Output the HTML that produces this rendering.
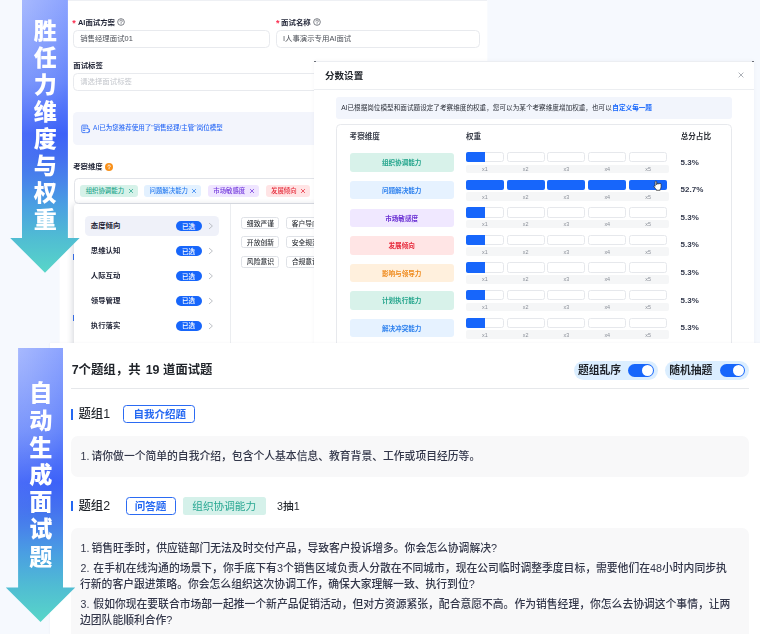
<!DOCTYPE html>
<html lang="zh-CN"><head><meta charset="utf-8"><title>AI面试 - 胜任力维度与权重 / 自动生成面试题</title><style>
html,body{margin:0;padding:0}
body{width:760px;height:634px;overflow:hidden;background:#f6f9fe;position:relative;font-family:"Liberation Sans","Noto Sans CJK SC",sans-serif}
.L{position:absolute;left:0;top:0;display:block;margin:0}
.b{position:absolute;display:block}
.blur{filter:blur(.3px)}
.t{position:absolute;overflow:visible;line-height:1}
.lt{position:absolute;white-space:nowrap;margin:0;font-family:"Liberation Sans","Noto Sans CJK SC",sans-serif}
.sr{position:absolute;left:1px;top:1px;white-space:nowrap;line-height:1.067;font-family:"Liberation Sans","Noto Sans CJK SC",sans-serif}
</style></head><body><main><section class="L blur" id="form"><div class="b" style="left:60px;top:0px;width:427px;height:346px;background:#fff;box-shadow:0 0 2px #fff;"></div><div class="b" style="left:60px;top:0px;width:427px;height:1px;background:#eef0f4;"></div><div class="t" style="left:71.3px;top:18.48px;width:6.56px;height:12.44px"><span class="sr" style="font-size:9px;font-weight:700;color:#fb2c4e">*</span></div><div class="t" style="left:77px;top:17.9px;width:39px;height:10.58px"><span class="sr" style="font-size:7.4px;font-weight:700;color:#1d2133">AI面试方案</span></div><svg class="b" style="left:116.3px;top:17.4px" width="10" height="10" viewBox="0 0 10 10"><circle cx="5" cy="5" r="3.35" fill="none" stroke="#555a63" stroke-width=".75"/><path d="M3.9 4.1a1.15 1.15 0 1 1 1.7 1c-.4.25-.55.45-.55.9" fill="none" stroke="#555a63" stroke-width=".75" stroke-linecap="round"/><circle cx="5.05" cy="6.95" r=".42" fill="#555a63"/></svg><div class="b" style="left:73px;top:30px;width:197px;height:17.6px;background:#fff;border:1px solid #e8eaee;border-radius:4.5px;box-sizing:border-box;"></div><div class="t" style="left:79.2px;top:34.1px;width:55.2px;height:10.58px"><span class="sr" style="font-size:7.4px;font-weight:400;color:#4c5058">销售经理面试01</span></div><div class="t" style="left:275.1px;top:18.28px;width:6.56px;height:12.44px"><span class="sr" style="font-size:9px;font-weight:700;color:#fb2c4e">*</span></div><div class="t" style="left:280.1px;top:17.8px;width:32.4px;height:10.58px"><span class="sr" style="font-size:7.4px;font-weight:700;color:#1d2133">面试名称</span></div><svg class="b" style="left:312.3px;top:17.4px" width="10" height="10" viewBox="0 0 10 10"><circle cx="5" cy="5" r="3.35" fill="none" stroke="#555a63" stroke-width=".75"/><path d="M3.9 4.1a1.15 1.15 0 1 1 1.7 1c-.4.25-.55.45-.55.9" fill="none" stroke="#555a63" stroke-width=".75" stroke-linecap="round"/><circle cx="5.05" cy="6.95" r=".42" fill="#555a63"/></svg><div class="b" style="left:276.3px;top:30px;width:203.3px;height:17.6px;background:#fff;border:1px solid #e8eaee;border-radius:4.5px;box-sizing:border-box;"></div><div class="t" style="left:282px;top:34.1px;width:71.6px;height:10.58px"><span class="sr" style="font-size:7.4px;font-weight:400;color:#4c5058">I人事演示专用AI面试</span></div><div class="t" style="left:72.3px;top:61.1px;width:32px;height:10.58px"><span class="sr" style="font-size:7.4px;font-weight:700;color:#1d2133">面试标签</span></div><div class="b" style="left:73px;top:73.2px;width:406.6px;height:17.6px;background:#fff;border:1px solid #e8eaee;border-radius:4.5px;box-sizing:border-box;"></div><div class="t" style="left:79.2px;top:77.1px;width:54.3px;height:10.58px"><span class="sr" style="font-size:7.4px;font-weight:400;color:#c3c6cc">请选择面试标签</span></div><div class="b" style="left:73.2px;top:112.3px;width:406.4px;height:32.4px;background:#f3f5fc;border-radius:4.5px;"></div><svg class="b" style="left:80.5px;top:123.6px" width="10" height="10" viewBox="0 0 10 10"><path d="M6.7 3.2V2a.9.9 0 0 0-.9-.9H1.7a.9.9 0 0 0-.9.9v5.7a.9.9 0 0 0 .9.9h2.6" fill="none" stroke="#2f6df6" stroke-width=".85" stroke-linecap="round"/><path d="M2.3 2.95h2.9M2.3 4.7h2.2M2.3 6.45h1.5" stroke="#2f6df6" stroke-width=".85" stroke-linecap="round"/><path d="M5.6 4.6h1.8a1.2 1.2 0 0 1 1.2 1.2M8.6 7.4a1.2 1.2 0 0 1-1.2 1.2H5.6M7.5 5.75L8.6 6.6L7.5 7.45" fill="none" stroke="#2f6df6" stroke-width=".85" stroke-linecap="round" stroke-linejoin="round"/></svg><div class="t" style="left:92.1px;top:124.35px;width:133.5px;height:9.54px"><span class="sr" style="font-size:6.5px;font-weight:500;color:#2f6df6">AI已为您推荐使用了&quot;销售经理/主管&quot;岗位模型</span></div><div class="t" style="left:72.2px;top:162.1px;width:32.1px;height:10.58px"><span class="sr" style="font-size:7.4px;font-weight:700;color:#1d2133">考察维度</span></div><svg class="b" style="left:104.4px;top:161.8px" width="10" height="10" viewBox="0 0 10 10"><circle cx="5" cy="5" r="4" fill="#f8901a"/><path d="M3.9 4.2a1.15 1.15 0 1 1 1.7 1c-.4.25-.55.45-.55.85" fill="none" stroke="#fff" stroke-width=".9" stroke-linecap="round"/><circle cx="5.05" cy="6.85" r=".5" fill="#fff"/></svg><div class="b" style="left:74.2px;top:178px;width:405.4px;height:25.6px;background:#fff;border:1px solid #e2e4e9;border-radius:4.5px;box-sizing:border-box;"></div><div class="b" style="left:80.1px;top:184.6px;width:57.8px;height:12.8px;background:#d6f2e9;border-radius:3px;"></div><div class="t" style="left:84.7px;top:186.8px;width:40.6px;height:9.42px"><span class="sr" style="font-size:6.4px;font-weight:500;color:#27a68d">组织协调能力</span></div><svg class="b" style="left:125.6px;top:186px" width="10" height="10" viewBox="0 0 10 10"><path d="M3.3 3.3L6.7 6.7M6.7 3.3L3.3 6.7" stroke="#27a68d" stroke-width="0.75" stroke-linecap="round"/></svg><div class="b" style="left:144.2px;top:184.6px;width:57.1px;height:12.8px;background:#e3f1ff;border-radius:3px;"></div><div class="t" style="left:148.6px;top:186.8px;width:40.4px;height:9.42px"><span class="sr" style="font-size:6.4px;font-weight:500;color:#2a7df0">问题解决能力</span></div><svg class="b" style="left:189.2px;top:186px" width="10" height="10" viewBox="0 0 10 10"><path d="M3.3 3.3L6.7 6.7M6.7 3.3L3.3 6.7" stroke="#2a7df0" stroke-width="0.75" stroke-linecap="round"/></svg><div class="b" style="left:207.9px;top:184.6px;width:51px;height:12.8px;background:#efe5ff;border-radius:3px;"></div><div class="t" style="left:212.3px;top:186.8px;width:33.7px;height:9.42px"><span class="sr" style="font-size:6.4px;font-weight:500;color:#7238dc">市场敏感度</span></div><svg class="b" style="left:247px;top:186px" width="10" height="10" viewBox="0 0 10 10"><path d="M3.3 3.3L6.7 6.7M6.7 3.3L3.3 6.7" stroke="#7238dc" stroke-width="0.75" stroke-linecap="round"/></svg><div class="b" style="left:265.9px;top:184.6px;width:44px;height:12.8px;background:#ffe4e5;border-radius:3px;"></div><div class="t" style="left:270px;top:186.8px;width:27.7px;height:9.42px"><span class="sr" style="font-size:6.4px;font-weight:500;color:#e62e3d">发展倾向</span></div><svg class="b" style="left:298px;top:186px" width="10" height="10" viewBox="0 0 10 10"><path d="M3.3 3.3L6.7 6.7M6.7 3.3L3.3 6.7" stroke="#e62e3d" stroke-width="0.75" stroke-linecap="round"/></svg><div class="b" style="left:73px;top:254px;width:1px;height:5.5px;background:#3b74f5;"></div><div class="b" style="left:73px;top:315px;width:1px;height:5.5px;background:#3b74f5;"></div><div class="b" style="left:74.4px;top:204.3px;width:405.2px;height:144px;background:#fff;border-radius:3px;box-shadow:-1px 1px 6px rgba(30,40,70,.2);"></div><div class="b" style="left:230.2px;top:204.3px;width:1px;height:144px;background:#ebedf0;"></div><div class="b" style="left:85px;top:216.3px;width:134px;height:19.5px;background:#eff1f9;border-radius:4.5px;"></div><div class="t" style="left:89.8px;top:221.4px;width:31.8px;height:10.58px"><span class="sr" style="font-size:7.4px;font-weight:700;color:#1d2133">态度倾向</span></div><div class="b" style="left:175.8px;top:220.9px;width:26.3px;height:10.2px;background:#1766fb;border-radius:5.1px;"></div><div class="t" style="left:181px;top:221.7px;width:15.2px;height:9.66px"><span class="sr" style="font-size:6.6px;font-weight:500;color:#fff">已选</span></div><svg class="b" style="left:206px;top:221.1px" width="10" height="10" viewBox="0 0 10 10"><path d="M3.3 2.3L6.4 5L3.3 7.7" fill="none" stroke="#adb1b8" stroke-width=".8" stroke-linecap="round" stroke-linejoin="round"/></svg><div class="t" style="left:89.8px;top:246.3px;width:31.8px;height:10.58px"><span class="sr" style="font-size:7.4px;font-weight:700;color:#1d2133">思维认知</span></div><div class="b" style="left:175.8px;top:245.8px;width:26.3px;height:10.2px;background:#1766fb;border-radius:5.1px;"></div><div class="t" style="left:181px;top:246.6px;width:15.2px;height:9.66px"><span class="sr" style="font-size:6.6px;font-weight:500;color:#fff">已选</span></div><svg class="b" style="left:206px;top:246px" width="10" height="10" viewBox="0 0 10 10"><path d="M3.3 2.3L6.4 5L3.3 7.7" fill="none" stroke="#adb1b8" stroke-width=".8" stroke-linecap="round" stroke-linejoin="round"/></svg><div class="t" style="left:89.8px;top:271.2px;width:31.8px;height:10.58px"><span class="sr" style="font-size:7.4px;font-weight:700;color:#1d2133">人际互动</span></div><div class="b" style="left:175.8px;top:270.7px;width:26.3px;height:10.2px;background:#1766fb;border-radius:5.1px;"></div><div class="t" style="left:181px;top:271.5px;width:15.2px;height:9.66px"><span class="sr" style="font-size:6.6px;font-weight:500;color:#fff">已选</span></div><svg class="b" style="left:206px;top:270.9px" width="10" height="10" viewBox="0 0 10 10"><path d="M3.3 2.3L6.4 5L3.3 7.7" fill="none" stroke="#adb1b8" stroke-width=".8" stroke-linecap="round" stroke-linejoin="round"/></svg><div class="t" style="left:89.8px;top:296.1px;width:31.8px;height:10.58px"><span class="sr" style="font-size:7.4px;font-weight:700;color:#1d2133">领导管理</span></div><div class="b" style="left:175.8px;top:295.6px;width:26.3px;height:10.2px;background:#1766fb;border-radius:5.1px;"></div><div class="t" style="left:181px;top:296.4px;width:15.2px;height:9.66px"><span class="sr" style="font-size:6.6px;font-weight:500;color:#fff">已选</span></div><svg class="b" style="left:206px;top:295.8px" width="10" height="10" viewBox="0 0 10 10"><path d="M3.3 2.3L6.4 5L3.3 7.7" fill="none" stroke="#adb1b8" stroke-width=".8" stroke-linecap="round" stroke-linejoin="round"/></svg><div class="t" style="left:89.8px;top:321px;width:31.8px;height:10.58px"><span class="sr" style="font-size:7.4px;font-weight:700;color:#1d2133">执行落实</span></div><div class="b" style="left:175.8px;top:320.5px;width:26.3px;height:10.2px;background:#1766fb;border-radius:5.1px;"></div><div class="t" style="left:181px;top:321.3px;width:15.2px;height:9.66px"><span class="sr" style="font-size:6.6px;font-weight:500;color:#fff">已选</span></div><svg class="b" style="left:206px;top:320.7px" width="10" height="10" viewBox="0 0 10 10"><path d="M3.3 2.3L6.4 5L3.3 7.7" fill="none" stroke="#adb1b8" stroke-width=".8" stroke-linecap="round" stroke-linejoin="round"/></svg><div class="b" style="left:241.4px;top:216.8px;width:38.1px;height:12.1px;background:#fff;border:1px solid #dfe2e7;border-radius:2.5px;box-sizing:border-box;"></div><div class="t" style="left:245.85px;top:218.5px;width:29.2px;height:9.89px"><span class="sr" style="font-size:6.8px;font-weight:500;color:#33373d">细致严谨</span></div><div class="b" style="left:286.2px;top:216.8px;width:38.1px;height:12.1px;background:#fff;border:1px solid #dfe2e7;border-radius:2.5px;box-sizing:border-box;"></div><div class="t" style="left:290.65px;top:218.5px;width:29.2px;height:9.89px"><span class="sr" style="font-size:6.8px;font-weight:500;color:#33373d">客户导向</span></div><div class="b" style="left:241.4px;top:236.2px;width:38.1px;height:12.1px;background:#fff;border:1px solid #dfe2e7;border-radius:2.5px;box-sizing:border-box;"></div><div class="t" style="left:245.85px;top:237.9px;width:29.2px;height:9.89px"><span class="sr" style="font-size:6.8px;font-weight:500;color:#33373d">开放创新</span></div><div class="b" style="left:286.2px;top:236.2px;width:38.1px;height:12.1px;background:#fff;border:1px solid #dfe2e7;border-radius:2.5px;box-sizing:border-box;"></div><div class="t" style="left:290.65px;top:237.9px;width:29.2px;height:9.89px"><span class="sr" style="font-size:6.8px;font-weight:500;color:#33373d">安全规范</span></div><div class="b" style="left:241.4px;top:255.6px;width:38.1px;height:12.1px;background:#fff;border:1px solid #dfe2e7;border-radius:2.5px;box-sizing:border-box;"></div><div class="t" style="left:245.85px;top:257.3px;width:29.2px;height:9.89px"><span class="sr" style="font-size:6.8px;font-weight:500;color:#33373d">风险意识</span></div><div class="b" style="left:286.2px;top:255.6px;width:38.1px;height:12.1px;background:#fff;border:1px solid #dfe2e7;border-radius:2.5px;box-sizing:border-box;"></div><div class="t" style="left:290.65px;top:257.3px;width:29.2px;height:9.89px"><span class="sr" style="font-size:6.8px;font-weight:500;color:#33373d">合规意识</span></div></section>
<section class="L blur" id="modal" style="left:314px;top:61px;width:440px;height:283px;background:#fff;overflow:hidden;box-shadow:0 0 4px rgba(30,40,70,.045)"><div class="t" style="left:10px;top:8.82px;width:40.3px;height:13.08px"><span class="sr" style="font-size:9.55px;font-weight:700;color:#1f2329">分数设置</span></div><svg class="b" style="left:422px;top:9px" width="10" height="10" viewBox="0 0 10 10"><path d="M2.9 2.9L7.1 7.1M7.1 2.9L2.9 7.1" stroke="#8a8f99" stroke-width=".7" stroke-linecap="round"/></svg><div class="b" style="left:0px;top:28.3px;width:440px;height:1px;background:#eceef1;"></div><div class="b" style="left:0px;top:0px;width:440px;height:1px;background:#eceef2;"></div><div class="b" style="left:0.3px;top:-0.4px;width:1.4px;height:1.4px;background:#6b6f78;"></div><div class="b" style="left:438.3px;top:-0.4px;width:1.4px;height:1.4px;background:#6b6f78;"></div><div class="b" style="left:21.7px;top:35.8px;width:396.2px;height:21.8px;background:#f2f5fc;border-radius:3px;"></div><div class="t" style="left:26.2px;top:42.19px;width:273.1px;height:9.68px"><span class="sr" style="font-size:6.62px;font-weight:400;color:#2c3039">AI已根据岗位模型和面试题设定了考察维度的权重，您可以为某个考察维度增加权重，也可以</span></div><div class="t" style="left:297.3px;top:42.19px;width:41.4px;height:9.68px"><span class="sr" style="font-size:6.62px;font-weight:700;color:#1766fb">自定义每一题</span></div><div class="b" style="left:21.7px;top:63.2px;width:396.2px;height:240px;background:#fff;border:1px solid #e7e9ed;border-radius:4.5px;box-sizing:border-box;"></div><div class="t" style="left:34.6px;top:70.9px;width:32.6px;height:10.82px"><span class="sr" style="font-size:7.6px;font-weight:700;color:#3a3f4b">考察维度</span></div><div class="t" style="left:150.9px;top:70.9px;width:16.8px;height:10.82px"><span class="sr" style="font-size:7.6px;font-weight:700;color:#3a3f4b">权重</span></div><div class="t" style="left:365.7px;top:70.9px;width:32.3px;height:10.82px"><span class="sr" style="font-size:7.6px;font-weight:700;color:#2a2e35">总分占比</span></div><div class="b" style="left:35.6px;top:92.4px;width:104.2px;height:18.4px;background:#d8f2ea;border-radius:3px;"></div><div class="t" style="left:66.9px;top:97.4px;width:41.6px;height:9.66px"><span class="sr" style="font-size:6.6px;font-weight:700;color:#24a58c">组织协调能力</span></div><div class="b" style="left:151.8px;top:103.6px;width:203.4px;height:8.6px;background:#f5f6f7;border-radius:2px;"></div><div class="b" style="left:151.8px;top:90.9px;width:38.1px;height:10.5px;background:#fff;border:1px solid #e6e8ec;border-radius:2.5px;box-sizing:border-box;"></div><div class="b" style="left:151.8px;top:90.9px;width:18.8px;height:10.5px;background:#1766fb;border-radius:2px 0 0 2px;"></div><div class="t" style="left:167px;top:105.08px;width:7.7px;height:8.26px"><span class="sr" style="font-size:5.4px;font-weight:400;color:#8a8f98">x1</span></div><div class="b" style="left:192.6px;top:90.9px;width:38.1px;height:10.5px;background:#fff;border:1px solid #e6e8ec;border-radius:2.5px;box-sizing:border-box;"></div><div class="t" style="left:207.8px;top:105.08px;width:7.7px;height:8.26px"><span class="sr" style="font-size:5.4px;font-weight:400;color:#8a8f98">x2</span></div><div class="b" style="left:233.4px;top:90.9px;width:38.1px;height:10.5px;background:#fff;border:1px solid #e6e8ec;border-radius:2.5px;box-sizing:border-box;"></div><div class="t" style="left:248.6px;top:105.08px;width:7.7px;height:8.26px"><span class="sr" style="font-size:5.4px;font-weight:400;color:#8a8f98">x3</span></div><div class="b" style="left:274.2px;top:90.9px;width:38.1px;height:10.5px;background:#fff;border:1px solid #e6e8ec;border-radius:2.5px;box-sizing:border-box;"></div><div class="t" style="left:289.4px;top:105.08px;width:7.7px;height:8.26px"><span class="sr" style="font-size:5.4px;font-weight:400;color:#8a8f98">x4</span></div><div class="b" style="left:315px;top:90.9px;width:38.1px;height:10.5px;background:#fff;border:1px solid #e6e8ec;border-radius:2.5px;box-sizing:border-box;"></div><div class="t" style="left:330.2px;top:105.08px;width:7.7px;height:8.26px"><span class="sr" style="font-size:5.4px;font-weight:400;color:#8a8f98">x5</span></div><div class="t" style="left:365.6px;top:96.52px;width:20.23px;height:11.28px"><span class="sr" style="font-size:8px;font-weight:700;color:#353b4e">5.3%</span></div><div class="b" style="left:35.6px;top:120px;width:104.2px;height:18.4px;background:#e6f2ff;border-radius:3px;"></div><div class="t" style="left:66.9px;top:125px;width:41.6px;height:9.66px"><span class="sr" style="font-size:6.6px;font-weight:700;color:#2c80ee">问题解决能力</span></div><div class="b" style="left:151.8px;top:131.2px;width:203.4px;height:8.6px;background:#f5f6f7;border-radius:2px;"></div><div class="b" style="left:151.8px;top:118.5px;width:38.1px;height:10.5px;background:#1766fb;border-radius:2px;"></div><div class="t" style="left:167px;top:132.68px;width:7.7px;height:8.26px"><span class="sr" style="font-size:5.4px;font-weight:400;color:#8a8f98">x1</span></div><div class="b" style="left:192.6px;top:118.5px;width:38.1px;height:10.5px;background:#1766fb;border-radius:2px;"></div><div class="t" style="left:207.8px;top:132.68px;width:7.7px;height:8.26px"><span class="sr" style="font-size:5.4px;font-weight:400;color:#8a8f98">x2</span></div><div class="b" style="left:233.4px;top:118.5px;width:38.1px;height:10.5px;background:#1766fb;border-radius:2px;"></div><div class="t" style="left:248.6px;top:132.68px;width:7.7px;height:8.26px"><span class="sr" style="font-size:5.4px;font-weight:400;color:#8a8f98">x3</span></div><div class="b" style="left:274.2px;top:118.5px;width:38.1px;height:10.5px;background:#1766fb;border-radius:2px;"></div><div class="t" style="left:289.4px;top:132.68px;width:7.7px;height:8.26px"><span class="sr" style="font-size:5.4px;font-weight:400;color:#8a8f98">x4</span></div><div class="b" style="left:315px;top:118.5px;width:38.1px;height:10.5px;background:#1766fb;border-radius:2px;"></div><div class="t" style="left:330.2px;top:132.68px;width:7.7px;height:8.26px"><span class="sr" style="font-size:5.4px;font-weight:400;color:#8a8f98">x5</span></div><div class="t" style="left:365.6px;top:124.12px;width:24.68px;height:11.28px"><span class="sr" style="font-size:8px;font-weight:700;color:#353b4e">52.7%</span></div><div class="b" style="left:35.6px;top:147.6px;width:104.2px;height:18.4px;background:#f0e8ff;border-radius:3px;"></div><div class="t" style="left:70.2px;top:152.6px;width:35px;height:9.66px"><span class="sr" style="font-size:6.6px;font-weight:700;color:#6a30d4">市场敏感度</span></div><div class="b" style="left:151.8px;top:158.8px;width:203.4px;height:8.6px;background:#f5f6f7;border-radius:2px;"></div><div class="b" style="left:151.8px;top:146.1px;width:38.1px;height:10.5px;background:#fff;border:1px solid #e6e8ec;border-radius:2.5px;box-sizing:border-box;"></div><div class="b" style="left:151.8px;top:146.1px;width:18.8px;height:10.5px;background:#1766fb;border-radius:2px 0 0 2px;"></div><div class="t" style="left:167px;top:160.28px;width:7.7px;height:8.26px"><span class="sr" style="font-size:5.4px;font-weight:400;color:#8a8f98">x1</span></div><div class="b" style="left:192.6px;top:146.1px;width:38.1px;height:10.5px;background:#fff;border:1px solid #e6e8ec;border-radius:2.5px;box-sizing:border-box;"></div><div class="t" style="left:207.8px;top:160.28px;width:7.7px;height:8.26px"><span class="sr" style="font-size:5.4px;font-weight:400;color:#8a8f98">x2</span></div><div class="b" style="left:233.4px;top:146.1px;width:38.1px;height:10.5px;background:#fff;border:1px solid #e6e8ec;border-radius:2.5px;box-sizing:border-box;"></div><div class="t" style="left:248.6px;top:160.28px;width:7.7px;height:8.26px"><span class="sr" style="font-size:5.4px;font-weight:400;color:#8a8f98">x3</span></div><div class="b" style="left:274.2px;top:146.1px;width:38.1px;height:10.5px;background:#fff;border:1px solid #e6e8ec;border-radius:2.5px;box-sizing:border-box;"></div><div class="t" style="left:289.4px;top:160.28px;width:7.7px;height:8.26px"><span class="sr" style="font-size:5.4px;font-weight:400;color:#8a8f98">x4</span></div><div class="b" style="left:315px;top:146.1px;width:38.1px;height:10.5px;background:#fff;border:1px solid #e6e8ec;border-radius:2.5px;box-sizing:border-box;"></div><div class="t" style="left:330.2px;top:160.28px;width:7.7px;height:8.26px"><span class="sr" style="font-size:5.4px;font-weight:400;color:#8a8f98">x5</span></div><div class="t" style="left:365.6px;top:151.72px;width:20.23px;height:11.28px"><span class="sr" style="font-size:8px;font-weight:700;color:#353b4e">5.3%</span></div><div class="b" style="left:35.6px;top:175.2px;width:104.2px;height:18.4px;background:#ffe5e5;border-radius:3px;"></div><div class="t" style="left:73.5px;top:180.2px;width:28.4px;height:9.66px"><span class="sr" style="font-size:6.6px;font-weight:700;color:#e72a3c">发展倾向</span></div><div class="b" style="left:151.8px;top:186.4px;width:203.4px;height:8.6px;background:#f5f6f7;border-radius:2px;"></div><div class="b" style="left:151.8px;top:173.7px;width:38.1px;height:10.5px;background:#fff;border:1px solid #e6e8ec;border-radius:2.5px;box-sizing:border-box;"></div><div class="b" style="left:151.8px;top:173.7px;width:18.8px;height:10.5px;background:#1766fb;border-radius:2px 0 0 2px;"></div><div class="t" style="left:167px;top:187.88px;width:7.7px;height:8.26px"><span class="sr" style="font-size:5.4px;font-weight:400;color:#8a8f98">x1</span></div><div class="b" style="left:192.6px;top:173.7px;width:38.1px;height:10.5px;background:#fff;border:1px solid #e6e8ec;border-radius:2.5px;box-sizing:border-box;"></div><div class="t" style="left:207.8px;top:187.88px;width:7.7px;height:8.26px"><span class="sr" style="font-size:5.4px;font-weight:400;color:#8a8f98">x2</span></div><div class="b" style="left:233.4px;top:173.7px;width:38.1px;height:10.5px;background:#fff;border:1px solid #e6e8ec;border-radius:2.5px;box-sizing:border-box;"></div><div class="t" style="left:248.6px;top:187.88px;width:7.7px;height:8.26px"><span class="sr" style="font-size:5.4px;font-weight:400;color:#8a8f98">x3</span></div><div class="b" style="left:274.2px;top:173.7px;width:38.1px;height:10.5px;background:#fff;border:1px solid #e6e8ec;border-radius:2.5px;box-sizing:border-box;"></div><div class="t" style="left:289.4px;top:187.88px;width:7.7px;height:8.26px"><span class="sr" style="font-size:5.4px;font-weight:400;color:#8a8f98">x4</span></div><div class="b" style="left:315px;top:173.7px;width:38.1px;height:10.5px;background:#fff;border:1px solid #e6e8ec;border-radius:2.5px;box-sizing:border-box;"></div><div class="t" style="left:330.2px;top:187.88px;width:7.7px;height:8.26px"><span class="sr" style="font-size:5.4px;font-weight:400;color:#8a8f98">x5</span></div><div class="t" style="left:365.6px;top:179.32px;width:20.23px;height:11.28px"><span class="sr" style="font-size:8px;font-weight:700;color:#353b4e">5.3%</span></div><div class="b" style="left:35.6px;top:202.8px;width:104.2px;height:18.4px;background:#fff0dd;border-radius:3px;"></div><div class="t" style="left:66.9px;top:207.8px;width:41.6px;height:9.66px"><span class="sr" style="font-size:6.6px;font-weight:700;color:#ef8a1d">影响与领导力</span></div><div class="b" style="left:151.8px;top:214px;width:203.4px;height:8.6px;background:#f5f6f7;border-radius:2px;"></div><div class="b" style="left:151.8px;top:201.3px;width:38.1px;height:10.5px;background:#fff;border:1px solid #e6e8ec;border-radius:2.5px;box-sizing:border-box;"></div><div class="b" style="left:151.8px;top:201.3px;width:18.8px;height:10.5px;background:#1766fb;border-radius:2px 0 0 2px;"></div><div class="t" style="left:167px;top:215.48px;width:7.7px;height:8.26px"><span class="sr" style="font-size:5.4px;font-weight:400;color:#8a8f98">x1</span></div><div class="b" style="left:192.6px;top:201.3px;width:38.1px;height:10.5px;background:#fff;border:1px solid #e6e8ec;border-radius:2.5px;box-sizing:border-box;"></div><div class="t" style="left:207.8px;top:215.48px;width:7.7px;height:8.26px"><span class="sr" style="font-size:5.4px;font-weight:400;color:#8a8f98">x2</span></div><div class="b" style="left:233.4px;top:201.3px;width:38.1px;height:10.5px;background:#fff;border:1px solid #e6e8ec;border-radius:2.5px;box-sizing:border-box;"></div><div class="t" style="left:248.6px;top:215.48px;width:7.7px;height:8.26px"><span class="sr" style="font-size:5.4px;font-weight:400;color:#8a8f98">x3</span></div><div class="b" style="left:274.2px;top:201.3px;width:38.1px;height:10.5px;background:#fff;border:1px solid #e6e8ec;border-radius:2.5px;box-sizing:border-box;"></div><div class="t" style="left:289.4px;top:215.48px;width:7.7px;height:8.26px"><span class="sr" style="font-size:5.4px;font-weight:400;color:#8a8f98">x4</span></div><div class="b" style="left:315px;top:201.3px;width:38.1px;height:10.5px;background:#fff;border:1px solid #e6e8ec;border-radius:2.5px;box-sizing:border-box;"></div><div class="t" style="left:330.2px;top:215.48px;width:7.7px;height:8.26px"><span class="sr" style="font-size:5.4px;font-weight:400;color:#8a8f98">x5</span></div><div class="t" style="left:365.6px;top:206.92px;width:20.23px;height:11.28px"><span class="sr" style="font-size:8px;font-weight:700;color:#353b4e">5.3%</span></div><div class="b" style="left:35.6px;top:230.4px;width:104.2px;height:18.4px;background:#d8f2ea;border-radius:3px;"></div><div class="t" style="left:66.9px;top:235.4px;width:41.6px;height:9.66px"><span class="sr" style="font-size:6.6px;font-weight:700;color:#24a58c">计划执行能力</span></div><div class="b" style="left:151.8px;top:241.6px;width:203.4px;height:8.6px;background:#f5f6f7;border-radius:2px;"></div><div class="b" style="left:151.8px;top:228.9px;width:38.1px;height:10.5px;background:#fff;border:1px solid #e6e8ec;border-radius:2.5px;box-sizing:border-box;"></div><div class="b" style="left:151.8px;top:228.9px;width:18.8px;height:10.5px;background:#1766fb;border-radius:2px 0 0 2px;"></div><div class="t" style="left:167px;top:243.08px;width:7.7px;height:8.26px"><span class="sr" style="font-size:5.4px;font-weight:400;color:#8a8f98">x1</span></div><div class="b" style="left:192.6px;top:228.9px;width:38.1px;height:10.5px;background:#fff;border:1px solid #e6e8ec;border-radius:2.5px;box-sizing:border-box;"></div><div class="t" style="left:207.8px;top:243.08px;width:7.7px;height:8.26px"><span class="sr" style="font-size:5.4px;font-weight:400;color:#8a8f98">x2</span></div><div class="b" style="left:233.4px;top:228.9px;width:38.1px;height:10.5px;background:#fff;border:1px solid #e6e8ec;border-radius:2.5px;box-sizing:border-box;"></div><div class="t" style="left:248.6px;top:243.08px;width:7.7px;height:8.26px"><span class="sr" style="font-size:5.4px;font-weight:400;color:#8a8f98">x3</span></div><div class="b" style="left:274.2px;top:228.9px;width:38.1px;height:10.5px;background:#fff;border:1px solid #e6e8ec;border-radius:2.5px;box-sizing:border-box;"></div><div class="t" style="left:289.4px;top:243.08px;width:7.7px;height:8.26px"><span class="sr" style="font-size:5.4px;font-weight:400;color:#8a8f98">x4</span></div><div class="b" style="left:315px;top:228.9px;width:38.1px;height:10.5px;background:#fff;border:1px solid #e6e8ec;border-radius:2.5px;box-sizing:border-box;"></div><div class="t" style="left:330.2px;top:243.08px;width:7.7px;height:8.26px"><span class="sr" style="font-size:5.4px;font-weight:400;color:#8a8f98">x5</span></div><div class="t" style="left:365.6px;top:234.52px;width:20.23px;height:11.28px"><span class="sr" style="font-size:8px;font-weight:700;color:#353b4e">5.3%</span></div><div class="b" style="left:35.6px;top:258px;width:104.2px;height:18.4px;background:#e6f2ff;border-radius:3px;"></div><div class="t" style="left:66.9px;top:263px;width:41.6px;height:9.66px"><span class="sr" style="font-size:6.6px;font-weight:700;color:#2c80ee">解决冲突能力</span></div><div class="b" style="left:151.8px;top:269.2px;width:203.4px;height:8.6px;background:#f5f6f7;border-radius:2px;"></div><div class="b" style="left:151.8px;top:256.5px;width:38.1px;height:10.5px;background:#fff;border:1px solid #e6e8ec;border-radius:2.5px;box-sizing:border-box;"></div><div class="b" style="left:151.8px;top:256.5px;width:18.8px;height:10.5px;background:#1766fb;border-radius:2px 0 0 2px;"></div><div class="t" style="left:167px;top:270.68px;width:7.7px;height:8.26px"><span class="sr" style="font-size:5.4px;font-weight:400;color:#8a8f98">x1</span></div><div class="b" style="left:192.6px;top:256.5px;width:38.1px;height:10.5px;background:#fff;border:1px solid #e6e8ec;border-radius:2.5px;box-sizing:border-box;"></div><div class="t" style="left:207.8px;top:270.68px;width:7.7px;height:8.26px"><span class="sr" style="font-size:5.4px;font-weight:400;color:#8a8f98">x2</span></div><div class="b" style="left:233.4px;top:256.5px;width:38.1px;height:10.5px;background:#fff;border:1px solid #e6e8ec;border-radius:2.5px;box-sizing:border-box;"></div><div class="t" style="left:248.6px;top:270.68px;width:7.7px;height:8.26px"><span class="sr" style="font-size:5.4px;font-weight:400;color:#8a8f98">x3</span></div><div class="b" style="left:274.2px;top:256.5px;width:38.1px;height:10.5px;background:#fff;border:1px solid #e6e8ec;border-radius:2.5px;box-sizing:border-box;"></div><div class="t" style="left:289.4px;top:270.68px;width:7.7px;height:8.26px"><span class="sr" style="font-size:5.4px;font-weight:400;color:#8a8f98">x4</span></div><div class="b" style="left:315px;top:256.5px;width:38.1px;height:10.5px;background:#fff;border:1px solid #e6e8ec;border-radius:2.5px;box-sizing:border-box;"></div><div class="t" style="left:330.2px;top:270.68px;width:7.7px;height:8.26px"><span class="sr" style="font-size:5.4px;font-weight:400;color:#8a8f98">x5</span></div><div class="t" style="left:365.6px;top:262.12px;width:20.23px;height:11.28px"><span class="sr" style="font-size:8px;font-weight:700;color:#353b4e">5.3%</span></div><svg class="b" style="left:338px;top:119.3px" width="11" height="11.5" viewBox="0 0 11 11.5"><path d="M3.1 6.3V1.9a.8.8 0 0 1 1.6 0v2.9l.2-.9a.75.75 0 0 1 1.45.25l.1-.35a.7.7 0 0 1 1.35.3l.05-.2a.65.65 0 0 1 1.25.3v2.6c0 1.3-.5 2-1 2.6v.9H4.3v-.8c-.7-.6-1.6-1.7-2.3-2.9-.4-.7.5-1.3 1.1-.3z" fill="#fff" stroke="#222" stroke-width=".7" stroke-linejoin="round"/></svg></section>
<section class="L" id="questions"><div class="b" style="left:49.7px;top:343.4px;width:711px;height:291px;background:#fff;box-shadow:0 0 2px rgba(30,40,70,.06);"></div><div class="t" style="left:70.7px;top:362.8px;width:70.9px;height:16.38px"><span class="sr" style="font-size:12.4px;font-weight:700;color:#1f2329">7个题组，共</span></div><div class="t" style="left:144.7px;top:362.8px;width:14px;height:16.38px"><span class="sr" style="font-size:12.4px;font-weight:700;color:#1f2329">19</span></div><div class="t" style="left:162.1px;top:362.85px;width:51px;height:16.27px"><span class="sr" style="font-size:12.3px;font-weight:700;color:#1f2329">道面试题</span></div><div class="b" style="left:574px;top:360.5px;width:83.9px;height:19.8px;background:#dbeeff;border-radius:10px;"></div><div class="t" style="left:576.9px;top:364.1px;width:45.1px;height:14.53px"><span class="sr" style="font-size:10.8px;font-weight:700;color:#1f2329">题组乱序</span></div><div class="b" style="left:628.4px;top:364px;width:25.6px;height:13.4px;background:#1766fb;border-radius:7px;"></div><div class="b" style="left:641.8px;top:365.2px;width:11px;height:11px;background:#fff;border-radius:6px;"></div><div class="b" style="left:665.3px;top:360.5px;width:83.7px;height:19.8px;background:#dbeeff;border-radius:10px;"></div><div class="t" style="left:668.2px;top:364.1px;width:45.2px;height:14.53px"><span class="sr" style="font-size:10.8px;font-weight:700;color:#1f2329">随机抽题</span></div><div class="b" style="left:719.7px;top:364px;width:25.3px;height:13.4px;background:#1766fb;border-radius:7px;"></div><div class="b" style="left:732.8px;top:365.2px;width:11px;height:11px;background:#fff;border-radius:6px;"></div><div class="b" style="left:71.3px;top:387.5px;width:677.7px;height:1.4px;background:#e6e8eb;"></div><div class="b" style="left:71.3px;top:409px;width:1.7px;height:10.5px;background:#2468f2;"></div><div class="t" style="left:77.4px;top:407px;width:32px;height:16.38px"><span class="sr" style="font-size:12.4px;font-weight:500;color:#1f2329">题组1</span></div><div class="b" style="left:122.9px;top:405.3px;width:71.8px;height:17.3px;background:#fff;border:1px solid #2b6bf3;border-radius:3.5px;box-sizing:border-box;"></div><div class="t" style="left:132.4px;top:407.85px;width:54.4px;height:14.18px"><span class="sr" style="font-size:10.5px;font-weight:700;color:#2468f2">自我介绍题</span></div><div class="b" style="left:71px;top:435.8px;width:678px;height:40.8px;background:#f8f8f9;border-radius:7px;"></div><div class="t" style="left:79.6px;top:450.07px;width:9.64px;height:14.3px"><span class="sr" style="font-size:10.6px;font-weight:400;color:#33374a">1.</span></div><div class="t" style="left:90.5px;top:450.2px;width:390.8px;height:14.53px"><span class="sr" style="font-size:10.8px;font-weight:500;color:#33374a">请你做一个简单的自我介绍，包含个人基本信息、教育背景、工作或项目经历等。</span></div><div class="b" style="left:71.3px;top:500.8px;width:1.7px;height:10.5px;background:#2468f2;"></div><div class="t" style="left:77.4px;top:499.1px;width:34.1px;height:16.38px"><span class="sr" style="font-size:12.4px;font-weight:500;color:#1f2329">题组2</span></div><div class="b" style="left:125.8px;top:497.4px;width:50px;height:17.3px;background:#fff;border:1px solid #2b6bf3;border-radius:3.5px;box-sizing:border-box;"></div><div class="t" style="left:133.7px;top:499.9px;width:34.1px;height:14.3px"><span class="sr" style="font-size:10.6px;font-weight:700;color:#2468f2">问答题</span></div><div class="b" style="left:183.3px;top:497.4px;width:82.9px;height:17.3px;background:#d5f1ea;border-radius:2.5px;"></div><div class="t" style="left:191.3px;top:499.88px;width:65.9px;height:14.35px"><span class="sr" style="font-size:10.65px;font-weight:400;color:#27a792">组织协调能力</span></div><div class="t" style="left:276px;top:499.85px;width:24px;height:14.41px"><span class="sr" style="font-size:10.7px;font-weight:500;color:#1f2329">3抽1</span></div><div class="b" style="left:71px;top:528.4px;width:678px;height:120px;background:#f8f8f9;border-radius:7px;"></div><div class="t" style="left:79.6px;top:542.17px;width:9.64px;height:14.3px"><span class="sr" style="font-size:10.6px;font-weight:400;color:#33374a">1.</span></div><div class="t" style="left:90.5px;top:542.3px;width:407.39px;height:14.53px"><span class="sr" style="font-size:10.8px;font-weight:500;color:#33374a">销售旺季时，供应链部门无法及时交付产品，导致客户投诉增多。你会怎么协调解决?</span></div><div class="t" style="left:79.6px;top:561.67px;width:11.24px;height:14.3px"><span class="sr" style="font-size:10.6px;font-weight:400;color:#33374a">2.</span></div><div class="t" style="left:92.35px;top:561.8px;width:638.23px;height:14.53px"><span class="sr" style="font-size:10.8px;font-weight:500;color:#33374a">在手机在线沟通的场景下，你手底下有3个销售区域负责人分散在不同城市，现在公司临时调整季度目标，需要他们在48小时内同步执</span></div><div class="t" style="left:79px;top:578.3px;width:396.59px;height:14.53px"><span class="sr" style="font-size:10.8px;font-weight:500;color:#33374a">行新的客户跟进策略。你会怎么组织这次协调工作，确保大家理解一致、执行到位?</span></div><div class="t" style="left:79.6px;top:597.97px;width:11.24px;height:14.3px"><span class="sr" style="font-size:10.6px;font-weight:400;color:#33374a">3.</span></div><div class="t" style="left:92.35px;top:598.1px;width:640.7px;height:14.53px"><span class="sr" style="font-size:10.8px;font-weight:500;color:#33374a">假如你现在要联合市场部一起推一个新产品促销活动，但对方资源紧张，配合意愿不高。作为销售经理，你怎么去协调这个事情，让两</span></div><div class="t" style="left:79px;top:614.1px;width:94.19px;height:14.53px"><span class="sr" style="font-size:10.8px;font-weight:500;color:#33374a">边团队能顺利合作?</span></div></section>
<aside class="L" id="arrows"><svg class="b" style="left:0;top:0" width="90" height="275" viewBox="0 0 90 275"><linearGradient id="ag1" x1="0" y1="0" x2="0" y2="273" gradientUnits="userSpaceOnUse"><stop offset="0" stop-color="#88a0fe"/><stop offset=".3" stop-color="#6585fb"/><stop offset=".49" stop-color="#3d62f8"/><stop offset=".58" stop-color="#4470f0"/><stop offset=".66" stop-color="#4884ea"/><stop offset=".75" stop-color="#4a9fe2"/><stop offset=".87" stop-color="#50bcd3"/><stop offset="1" stop-color="#58d6c8"/></linearGradient><radialGradient id="ah1" cx="0" cy="0" r="1" gradientUnits="userSpaceOnUse" gradientTransform="translate(22 0) scale(52 172)"><stop offset="0" stop-color="#fff" stop-opacity=".26"/><stop offset="1" stop-color="#fff" stop-opacity="0"/></radialGradient><path d="M22 0H67.9V238H79.6L45 272.8L10.2 238H22z" fill="url(#ag1)"/><path d="M22 0H67.9V238H79.6L45 272.8L10.2 238H22z" fill="url(#ah1)"/></svg><div class="t" style="left:32.85px;top:17.95px;width:25.1px;height:28.8px"><span class="sr" style="font-size:23.1px;font-weight:900;color:#fff">胜</span></div><div class="t" style="left:32.85px;top:45px;width:25.1px;height:28.8px"><span class="sr" style="font-size:23.1px;font-weight:900;color:#fff">任</span></div><div class="t" style="left:32.85px;top:72.05px;width:25.1px;height:28.8px"><span class="sr" style="font-size:23.1px;font-weight:900;color:#fff">力</span></div><div class="t" style="left:32.85px;top:99.1px;width:25.1px;height:28.8px"><span class="sr" style="font-size:23.1px;font-weight:900;color:#fff">维</span></div><div class="t" style="left:32.85px;top:126.15px;width:25.1px;height:28.8px"><span class="sr" style="font-size:23.1px;font-weight:900;color:#fff">度</span></div><div class="t" style="left:32.85px;top:153.2px;width:25.1px;height:28.8px"><span class="sr" style="font-size:23.1px;font-weight:900;color:#fff">与</span></div><div class="t" style="left:32.85px;top:180.25px;width:25.1px;height:28.8px"><span class="sr" style="font-size:23.1px;font-weight:900;color:#fff">权</span></div><div class="t" style="left:32.85px;top:207.3px;width:25.1px;height:28.8px"><span class="sr" style="font-size:23.1px;font-weight:900;color:#fff">重</span></div><svg class="b" style="left:0;top:0" width="90" height="634" viewBox="0 0 90 634"><linearGradient id="ag2" x1="0" y1="348" x2="0" y2="622" gradientUnits="userSpaceOnUse"><stop offset="0" stop-color="#88a0fe"/><stop offset=".3" stop-color="#6585fb"/><stop offset=".49" stop-color="#3d62f8"/><stop offset=".58" stop-color="#4470f0"/><stop offset=".66" stop-color="#4884ea"/><stop offset=".75" stop-color="#4a9fe2"/><stop offset=".87" stop-color="#50bcd3"/><stop offset="1" stop-color="#58d6c8"/></linearGradient><radialGradient id="ah2" cx="0" cy="0" r="1" gradientUnits="userSpaceOnUse" gradientTransform="translate(18.1 348) scale(52 172)"><stop offset="0" stop-color="#fff" stop-opacity=".26"/><stop offset="1" stop-color="#fff" stop-opacity="0"/></radialGradient><path d="M18.1 348H63V587.6H75.2L40.5 622L5.8 587.6H18.1z" fill="url(#ag2)"/><path d="M18.1 348H63V587.6H75.2L40.5 622L5.8 587.6H18.1z" fill="url(#ah2)"/></svg><div class="t" style="left:28.15px;top:380.45px;width:25.1px;height:28.8px"><span class="sr" style="font-size:23.1px;font-weight:900;color:#fff">自</span></div><div class="t" style="left:28.15px;top:407.65px;width:25.1px;height:28.8px"><span class="sr" style="font-size:23.1px;font-weight:900;color:#fff">动</span></div><div class="t" style="left:28.15px;top:434.85px;width:25.1px;height:28.8px"><span class="sr" style="font-size:23.1px;font-weight:900;color:#fff">生</span></div><div class="t" style="left:28.15px;top:462.05px;width:25.1px;height:28.8px"><span class="sr" style="font-size:23.1px;font-weight:900;color:#fff">成</span></div><div class="t" style="left:28.15px;top:489.25px;width:25.1px;height:28.8px"><span class="sr" style="font-size:23.1px;font-weight:900;color:#fff">面</span></div><div class="t" style="left:28.15px;top:516.45px;width:25.1px;height:28.8px"><span class="sr" style="font-size:23.1px;font-weight:900;color:#fff">试</span></div><div class="t" style="left:28.15px;top:543.65px;width:25.1px;height:28.8px"><span class="sr" style="font-size:23.1px;font-weight:900;color:#fff">题</span></div></aside></main></body></html>
